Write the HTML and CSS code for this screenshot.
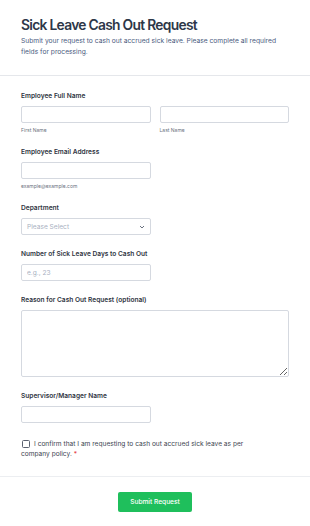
FILE: index.html
```html
<!DOCTYPE html>
<html lang="en">
<head>
  <meta charset="UTF-8">
  <title>Sick Leave Cash Out Request</title>
  <link rel="stylesheet" href="styles.css">
</head>
<body>

<div class="form-card">
  <!-- Header -->
  <div class="form-header">
    <h1>Sick Leave Cash Out Request</h1>
    <p>Submit your request to cash out accrued sick leave. Please complete all required fields for processing.</p>
  </div>

  <div class="form-body">
    <div class="field">
      <label class="field-label">Employee Full Name</label>
      <div class="name-row">
        <div class="name-col">
          <input type="text">
          <div class="sub-label">First Name</div>
        </div>
        <div class="name-col">
          <input type="text">
          <div class="sub-label">Last Name</div>
        </div>
      </div>
    </div>

    <div class="field">
      <label class="field-label">Employee Email Address</label>
      <input type="email" class="half">
      <div class="sub-label">example@example.com</div>
    </div>

    <div class="field">
      <label class="field-label">Department</label>
      <div class="select-box half">
        <span>Please Select</span>
        <svg width="6" height="4" viewBox="0 0 6 4"><path d="M1 1l2 2 2-2" fill="none" stroke="#6b7280" stroke-width="1"/></svg>
      </div>
    </div>

    <div class="field">
      <label class="field-label">Number of Sick Leave Days to Cash Out</label>
      <input type="text" class="half" placeholder="e.g., 23">
    </div>

    <div class="field">
      <label class="field-label">Reason for Cash Out Request (optional)</label>
      <textarea></textarea>
    </div>

    <div class="field">
      <label class="field-label">Supervisor/Manager Name</label>
      <input type="text" class="half">
    </div>

    <div class="confirm">
      <span class="check-box"></span>I confirm that I am requesting to cash out accrued sick leave as per company policy. <span class="required">*</span>
    </div>
  </div>

  <div class="form-footer">
    <button class="submit-btn">Submit Request</button>
  </div>
</div>

</body>
</html>
```

FILE: styles.css
```css
body {
  margin: 0;
  padding: 0;
  background-color: #ffffff;
  font-family: Inter, "Noto Sans", sans-serif;
  color: #2d3748;
}

.form-card {
  width: 310px;
}

.form-header {
  padding: 16px 21px 18px;
  border-bottom: 1px solid #e5e7eb;
}

.form-header h1 {
  margin: 0;
  font-size: 13.8px;
  line-height: 19px;
  font-weight: 600;
  letter-spacing: -0.7px;
  color: #2d3748;
}

.form-header p {
  margin: 1px 0 0;
  font-size: 6.7px;
  line-height: 10.5px;
  color: #4a5a7e;
}

.form-body {
  padding: 15px 21px 0 21px;
}

.field {
  margin-bottom: 14px;
}

.field-label {
  display: block;
  font-size: 6.6px;
  line-height: 10px;
  font-weight: 600;
  color: #2f3542;
  margin-bottom: 5px;
}

input, textarea, .select-box {
  box-sizing: border-box;
  width: 100%;
  height: 17px;
  border: 1px solid #d5d9e0;
  border-radius: 2px;
  background: #fff;
  font-family: Inter, "Noto Sans", sans-serif;
  font-size: 6.6px;
  color: #2d3748;
  padding: 0 5px;
  outline: none;
  display: block;
  margin: 0;
}

input::placeholder {
  color: #a9b1bf;
}

.half {
  width: 130px;
}

.name-row {
  display: flex;
  gap: 9px;
}

.name-col {
  flex: 1;
}

.sub-label {
  font-size: 5px;
  line-height: 6px;
  color: #6b7280;
  margin-top: 4px;
}

.select-box {
  display: flex;
  align-items: center;
  justify-content: space-between;
  color: #a9b1bf;
  padding-right: 5px;
}

textarea {
  height: 67px;
  resize: vertical;
}

.confirm {
  margin-top: 16px;
  font-size: 6.6px;
  line-height: 10px;
  color: #3d4450;
  padding-right: 25px;
}

.check-box {
  display: inline-block;
  box-sizing: border-box;
  width: 8px;
  height: 8px;
  border: 1px solid #5b6270;
  border-radius: 1.5px;
  vertical-align: -1.5px;
  margin-right: 4px;
  margin-left: 1px;
}

.required {
  color: #e53e3e;
}

.form-footer {
  margin-top: 17px;
  border-top: 1px solid #eceef1;
  padding: 11px 0 17px;
  text-align: center;
}

.submit-btn {
  width: 74px;
  height: 20px;
  border: none;
  border-radius: 2px;
  background-color: #1fbf5c;
  color: #ffffff;
  font-family: Inter, "Noto Sans", sans-serif;
  font-size: 6.6px;
  font-weight: 500;
  cursor: pointer;
  padding: 0;
}
```
